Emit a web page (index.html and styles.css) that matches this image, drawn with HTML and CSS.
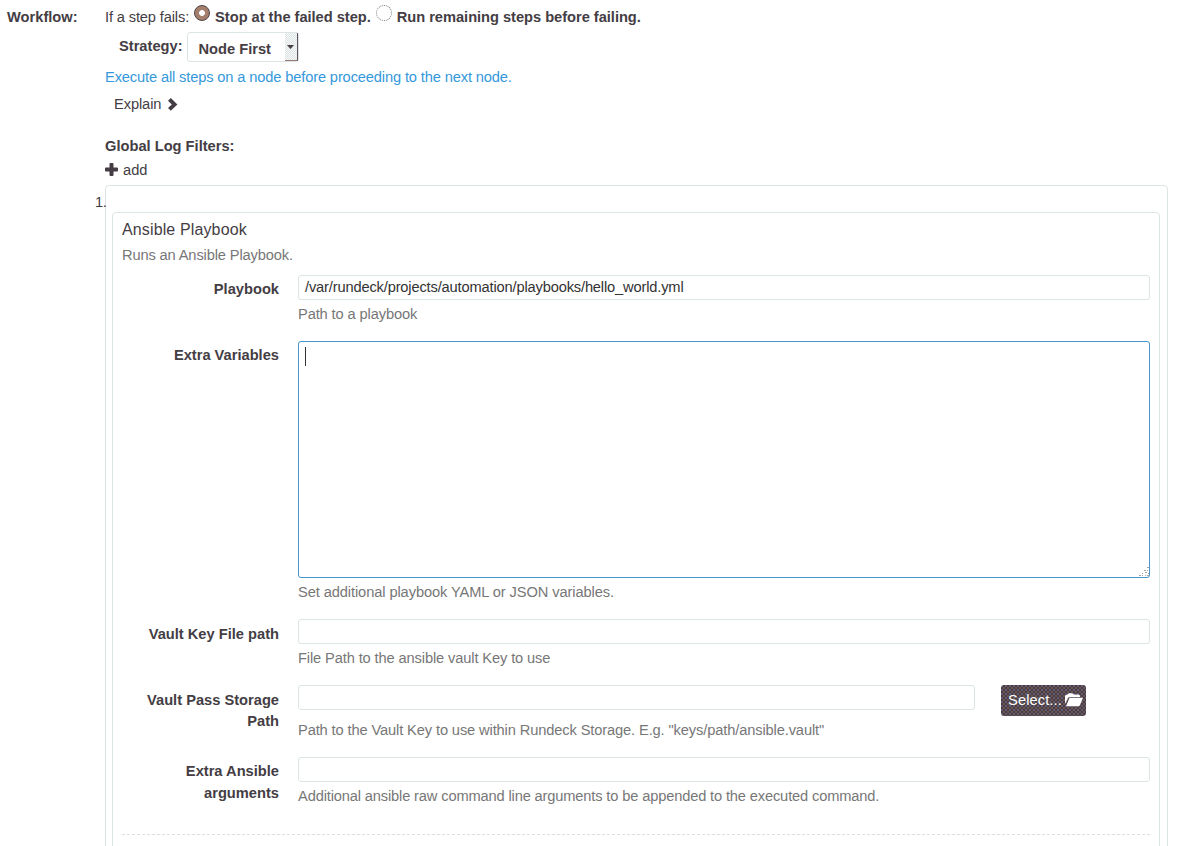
FILE: index.html
```
<!DOCTYPE html>
<html lang="en">
<head>
<meta charset="utf-8">
<title>Workflow</title>
<link rel="stylesheet" href="styles.css">
</head>
<body>
<main class="workflow">
  <div class="section-label">Workflow:</div>
  <div class="content">
    <div class="failure"><span class="question">If a step fails:</span><span class="radio checked"></span><b>Stop at the failed step.</b><span class="radio"></span><b>Run remaining steps before failing.</b></div>
    <div class="strategy"><b>Strategy:</b>
      <div class="select"><b>Node First</b><span class="arrow"><svg width="7" height="4" viewBox="0 0 7 4"><path d="M0 0h7L3.5 4z" fill="#443d44"/></svg></span></div>
    </div>
    <div class="info"><span>Execute all steps on a node before proceeding to the next node.</span></div>
    <div class="explain"><span>Explain</span><svg width="10" height="13" viewBox="0 0 10 13"><path d="M0 2.7 2.8 0 9.4 6.4 2.8 12.8 0 10.1 3.8 6.4z" fill="#443d44"/></svg></div>
    <div class="filters"><b>Global Log Filters:</b></div>
    <div class="add"><svg width="13" height="13" viewBox="0 0 13 13"><path d="M5.5 0h2Q8.5 0 8.5 1v3.5H12q1 0 1 1v2q0 1-1 1H8.5V12q0 1-1 1h-2q-1 0-1-1V8.500H1q-1 0-1-1v-2q0-1 1-1h3.500V1q0-1 1-1z" fill="#443d44"/></svg><span>add</span></div>
    <div class="step">
      <span class="number">1.</span>
      <div class="panel">
        <div class="title"><span>Ansible Playbook</span></div>
        <div class="desc"><span>Runs an Ansible Playbook.</span></div>
        <div class="row"><label>Playbook</label>
          <div><div class="input"><span>/var/rundeck/projects/automation/playbooks/hello_world.yml</span></div><p>Path to a playbook</p></div></div>
        <div class="row row-area"><label>Extra Variables</label>
          <div><div class="area"><i class="caret"></i><svg class="grip" width="10" height="10" viewBox="0 0 10 10"><path d="M8 0h2v1H8zM5 3h2v1H5zM8 3h1v1H8zM3 6h1v1H3zM6 5h2v1H6zM9 6h1v1H9zM0 8h2v1H0zM3 8h1v1H3zM6 8h1v1H6zM8 8h2v1H8z" fill="#aaa3a0"/></svg></div><p class="help-area">Set additional playbook YAML or JSON variables.</p></div></div>
        <div class="row row-key"><label>Vault Key File path</label>
          <div><div class="input"></div><p>File Path to the ansible vault Key to use</p></div></div>
        <div class="row row-storage"><label>Vault Pass Storage<br>Path</label>
          <div><div class="storage"><div class="input"></div><div class="button"><span>Select...</span><svg width="18" height="14" viewBox="0 0 18 14"><path d="M0 11V3.2Q0 2 1.2 2H2L3 .7Q3.500.2 4.2.2H7Q7.700.2 8 .8L8.500 1.500H13.500Q15 1.500 15 3V4H5Q3.700 4 3 5zM4.600 4.700H18L14.900 12.200Q14.400 13.200 13.300 13.200H1z" fill="#fff"/></svg></div></div><p>Path to the Vault Key to use within Rundeck Storage. E.g. "keys/path/ansible.vault"</p></div></div>
        <div class="row row-last"><label>Extra Ansible<br>arguments</label>
          <div><div class="input"></div><p class="help-args">Additional ansible raw command line arguments to be appended to the executed command.</p></div></div>
        <div class="divider"></div>
      </div>
    </div>
  </div>
</main>
</body>
</html>
```
FILE: styles.css
```
* { box-sizing: border-box; }
body { margin: 0; background: #fff; color: #443d44; font: 14.67px/21px "Liberation Sans", Arial, sans-serif; }
.workflow { display: grid; grid-template-columns: 98px 1063px; padding-left: 7px; height: 846px; overflow: hidden; }
.section-label { font-weight: bold; padding-top: 7px; }
.content { display: flex; flex-direction: column; min-width: 0; }
.content > div { flex: none; white-space: nowrap; }
.failure { display: flex; height: 30px; padding-top: 7px; }
.question { letter-spacing: -.14px; }
.failure b { letter-spacing: -.03px; }
.radio { width: 16px; height: 16px; border: 1px dotted #77727a; border-radius: 50%; margin: -2px 5px 0; background: #fff; }
.radio.checked { border: 1px solid #4b4044; background: radial-gradient(circle, #fff 0 2.6px, #a57f6e 3.2px); }
.strategy { display: flex; gap: 4px; height: 35px; padding: 2px 0 0 14px; }
.strategy > b { padding-top: 4px; }
.select { display: flex; justify-content: space-between; width: 112px; height: 30px; border: 1px solid #dce4e6; border-radius: 3px; padding-left: 11px; line-height: 32px; }
.arrow { display: flex; align-items: center; justify-content: center; width: 13px; height: 28px; background: repeating-conic-gradient(#dce4e6 0 25%, #f8f8f8 0 50%) 0 0 / 2px 2px; border-right: 1px solid #62545a; border-bottom: 1px solid #9a7b70; }
.info { height: 28px; padding-top: 2px; color: #3498db; letter-spacing: -.14px; }
.explain { display: flex; gap: 7px; height: 43px; padding: 1px 0 0 9px; letter-spacing: -.1px; }
.explain svg { margin-top: 4px; }
.filters { height: 24px; }
.add { display: flex; gap: 5px; height: 25px; }
.add svg { margin-top: 3px; }
.content > .step { position: relative; height: 700px; border: 1px solid #dce4e6; border-radius: 4px; padding: 26px 7px 0 6px; }
.number { position: absolute; left: -11px; top: 6px; letter-spacing: -.5px; }
.panel { height: 680px; border: 1px solid #dce4e6; border-radius: 4px; padding: 6px 9px; }
.title { height: 25px; font-size: 16px; letter-spacing: .13px; }
.desc { height: 31px; color: #777; line-height: 22px; letter-spacing: -.14px; }
.row { display: grid; grid-template-columns: 157px 852px; column-gap: 19px; height: 66px; }
.row label { font-weight: bold; text-align: right; padding-top: 4px; line-height: 21.5px; }
.row-area { height: 278px; }
.row-key label { padding-top: 5px; }
.row-storage { height: 72px; }
.row-storage label { padding-top: 5px; line-height: 21px; }
.row-last { height: 77px; }
.input { height: 25px; border: 1px solid #dce4e6; border-radius: 3px; padding: 1px 6px; color: #333; letter-spacing: -.16px; }
p { margin: 4px 0 0; color: #777; letter-spacing: -.125px; }
.help-area { letter-spacing: -.1px; }
.help-args { letter-spacing: -.15px; }
.area { position: relative; height: 237px; border: 1px solid #4496cb; border-radius: 3px; padding: 5px 6px; }
.caret { display: block; width: 1px; height: 19px; background: #333; }
.grip { position: absolute; right: 0; bottom: 0; }
.storage { display: grid; grid-template-columns: 677px 85px; column-gap: 26px; height: 31px; }
.button { display: flex; justify-content: space-between; padding: 5px 3px 0 7px; height: 31px; border-radius: 3px; color: #fff; letter-spacing: .1px; background: radial-gradient(circle at 1px 1px, #8185a0 .6px, transparent .8px) 0 0 / 4px 4px, radial-gradient(circle at 1px 1px, #947565 .6px, transparent .8px) 2px 2px / 4px 4px, #493c45; }
.button svg { margin-top: 3px; }
.divider { border-top: 1px dashed #dddfe0; }
```
